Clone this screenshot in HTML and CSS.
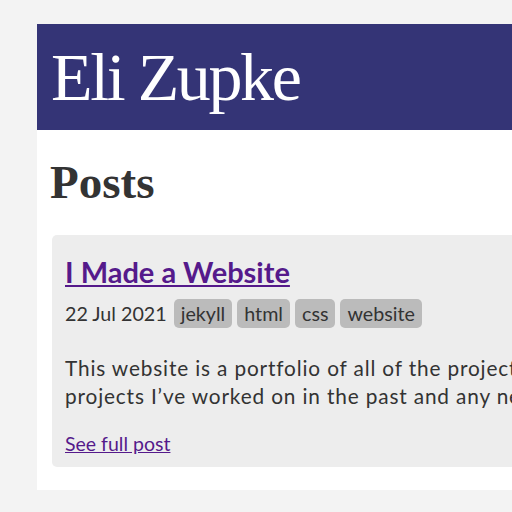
FILE: index.html
```html
<!DOCTYPE html>
<html>
<head>
<meta charset="utf-8">
<link rel="stylesheet" href="styles.css">
</head>
<body>
<div class="page">
  <header class="site-header">
    <h1 class="site-title">Eli Zupke</h1>
  </header>
  <main class="content">
    <h2 class="section-title">Posts</h2>
    <article class="post-card">
      <h3 class="post-title"><a href="#">I Made a Website</a></h3>
      <div class="post-meta">
        <span class="post-date">22 Jul 2021</span>
        <span class="tag">jekyll</span>
        <span class="tag">html</span>
        <span class="tag">css</span>
        <span class="tag">website</span>
      </div>
      <p class="post-excerpt">This website is a portfolio of all of the projects I’ve made. I’ll be adding projects I’ve worked on in the past and any new ones that I make.</p>
      <a class="post-link" href="#">See full post</a>
    </article>
  </main>
</div>
</body>
</html>
```

FILE: styles.css
```css
html, body {
  margin: 0;
  padding: 0;
  overflow: hidden;
}
body {
  background: #f3f3f3;
  font-family: Lato, "Liberation Sans", sans-serif;
  color: #333;
}
.page {
  margin: 24px 0 0 37px;
  width: 880px;
  background: #fff;
  padding-bottom: 23px;
}
.site-header {
  background: #343476;
  height: 106px;
  display: flex;
  align-items: center;
  padding: 0 14px;
}
.site-title {
  margin: 0;
  font-family: "Liberation Serif", serif;
  font-weight: normal;
  font-size: 68px;
  letter-spacing: -2.4px;
  color: #fff;
  line-height: 1;
}
.content {
  padding: 0 15px;
}
.section-title {
  margin: 0 0 0 -2px;
  padding-top: 27px;
  font-family: "Liberation Serif", serif;
  font-weight: bold;
  font-size: 47px;
  line-height: 50px;
  color: #333;
}
.post-card {
  margin-top: 28px;
  background: #ededed;
  border-radius: 5px;
  padding: 19px 13px 12px;
}
.post-title {
  margin: 0;
  font-size: 29px;
  font-weight: bold;
  line-height: 36px;
}
.post-title a {
  color: #551a8b;
}
.post-meta {
  display: flex;
  align-items: center;
  gap: 5px;
  margin-top: 9px;
  font-size: 19.7px;
}
.post-date {
  margin-right: 2px;
}
.tag {
  background: #bbb;
  border-radius: 5px;
  padding: 3px 7px;
  line-height: 23px;
}
.post-excerpt {
  margin: 26px 0 22px;
  font-size: 20.8px;
  letter-spacing: 0.85px;
  line-height: 28px;
  width: 770px;
}
.post-link {
  color: #551a8b;
  font-size: 19.5px;
}
```
